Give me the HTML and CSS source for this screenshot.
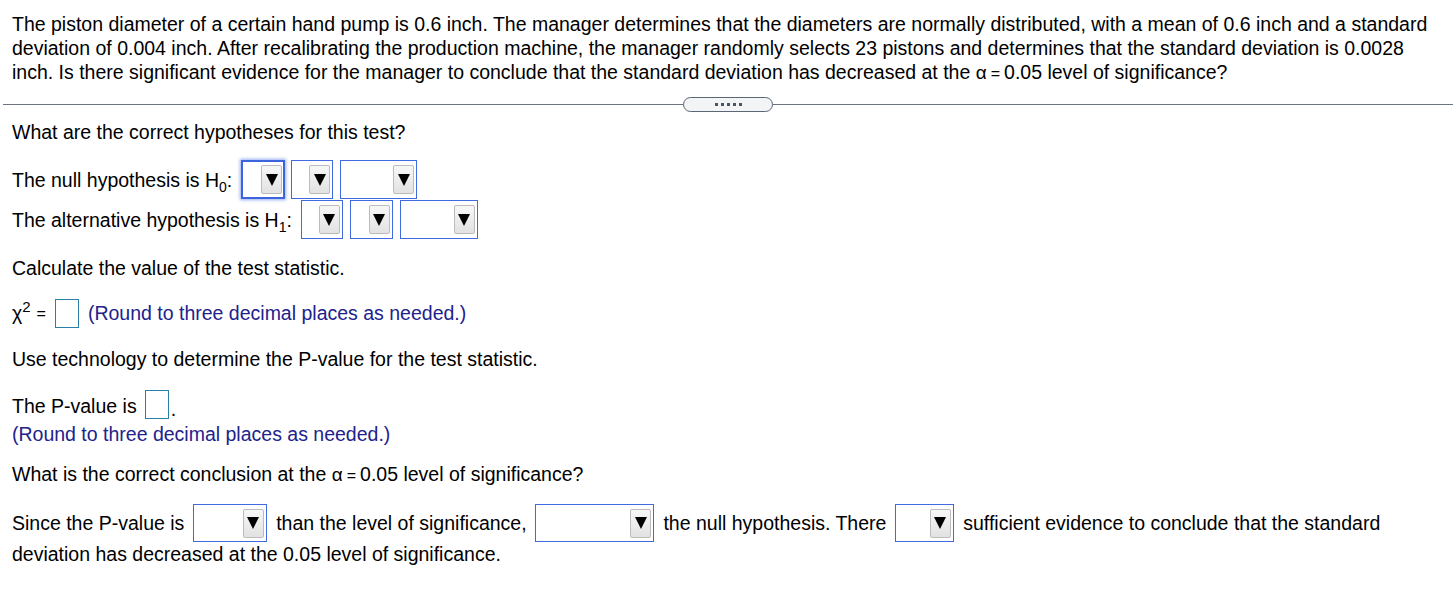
FILE: index.html
```html
<!DOCTYPE html>
<html>
<head>
<meta charset="utf-8">
<link rel="stylesheet" href="styles.css">
</head>
<body>
<div class="question"><span>The piston diameter of a certain hand pump is 0.6 inch. The manager determines that the diameters are normally distributed, with a mean of 0.6 inch and a standard</span> <span>deviation of 0.004 inch. After recalibrating the production machine, the manager randomly selects 23 pistons and determines that the standard deviation is 0.0028</span> <span>inch. Is there significant evidence for the manager to conclude that the standard deviation has decreased at the</span> <span class="greek">α</span><span class="eq">=</span><span>0.05 level of significance?</span></div>

<div class="divider"><span class="more"><i></i><i></i><i></i><i></i><i></i></span></div>

<div class="answer">
  <p class="line first">What are the correct hypotheses for this test?</p>

  <div class="hrow h0">
    <span class="label">The null hypothesis is H<sub>0</sub>:</span>
    <span class="dd focus w44"><span class="btn"><svg width="12" height="12" viewBox="0 0 12 12"><polygon points="0,0 12,0 6,12" fill="#000"/></svg></span></span>
    <span class="dd w42"><span class="btn"><svg width="12" height="12" viewBox="0 0 12 12"><polygon points="0,0 12,0 6,12" fill="#000"/></svg></span></span>
    <span class="dd w77"><span class="btn"><svg width="12" height="12" viewBox="0 0 12 12"><polygon points="0,0 12,0 6,12" fill="#000"/></svg></span></span>
  </div>
  <div class="hrow h1">
    <span class="label">The alternative hypothesis is H<sub>1</sub>:</span>
    <span class="dd w42"><span class="btn"><svg width="12" height="12" viewBox="0 0 12 12"><polygon points="0,0 12,0 6,12" fill="#000"/></svg></span></span>
    <span class="dd w43"><span class="btn"><svg width="12" height="12" viewBox="0 0 12 12"><polygon points="0,0 12,0 6,12" fill="#000"/></svg></span></span>
    <span class="dd w78"><span class="btn"><svg width="12" height="12" viewBox="0 0 12 12"><polygon points="0,0 12,0 6,12" fill="#000"/></svg></span></span>
  </div>

  <p class="line calc">Calculate the value of the test statistic.</p>

  <div class="irow chi">
    <span class="chisym">χ<sup>2</sup></span><span class="eqs">=</span><span class="inp"></span><span class="note">(Round to three decimal places as needed.)</span>
  </div>

  <p class="line tech">Use technology to determine the P-value for the test statistic.</p>

  <div class="irow pval">
    <span>The P-value is</span><span class="inp"></span><span class="dot">.</span>
  </div>
  <p class="line note pnote">(Round to three decimal places as needed.)</p>

  <p class="line concl">What is the correct conclusion at the <span class="greek">α</span><span class="eq">=</span>0.05 level of significance?</p>

  <p class="final"><span>Since the P-value is</span> <span class="dd w74 inl"><span class="btn"><svg width="12" height="12" viewBox="0 0 12 12"><polygon points="0,0 12,0 6,12" fill="#000"/></svg></span></span> <span>than the level of significance,</span> <span class="dd w119 inl"><span class="btn"><svg width="12" height="12" viewBox="0 0 12 12"><polygon points="0,0 12,0 6,12" fill="#000"/></svg></span></span> <span>the null hypothesis. There</span> <span class="dd w59 inl"><span class="btn"><svg width="12" height="12" viewBox="0 0 12 12"><polygon points="0,0 12,0 6,12" fill="#000"/></svg></span></span> <span>sufficient evidence to conclude that the standard</span> <span>deviation has decreased at the 0.05 level of significance.</span></p>
</div>
</body>
</html>
```

FILE: styles.css
```css
html, body {
  margin: 0;
  padding: 0;
  background: #fff;
}
body {
  font-family: "Liberation Sans", Arial, sans-serif;
  font-size: 19.5px;
  line-height: 24px;
  color: #000;
}
.question {
  padding: 12px 14px 0 12px;
}
.greek {
  font-size: 19px;
}
.eq {
  display: inline-block;
  margin: 0 4px;
  font-size: 16px;
}
.divider {
  position: relative;
  margin: 11px 0 0 3px;
  height: 15px;
  display: flex;
  justify-content: center;
}
.divider::before {
  content: "";
  position: absolute;
  left: 0;
  right: 0;
  top: 7px;
  border-top: 1px solid #6b7480;
}
.more {
  position: relative;
  box-sizing: border-box;
  width: 90px;
  height: 15px;
  border: 1px solid #5b6676;
  border-radius: 8px;
  background: #f3f4f6;
  display: flex;
  align-items: center;
  justify-content: center;
  gap: 3px;
}
.more i {
  display: block;
  width: 3px;
  height: 3px;
  background: #4b5563;
}
.answer {
  padding: 0 12px;
}
.line {
  margin: 0;
}
.first {
  margin-top: 8px;
}
.hrow {
  display: flex;
  align-items: center;
  height: 39px;
}
.h0 {
  margin-top: 16px;
}
.h1 {
  margin-top: 1px;
}
.label {
  margin-right: 9px;
}
sub {
  font-size: 14px;
  line-height: 0;
  vertical-align: -5px;
}
sup {
  font-size: 15px;
  line-height: 0;
  vertical-align: 8px;
}
.dd {
  box-sizing: border-box;
  height: 39px;
  border: 1px solid #4169e1;
  background: #fff;
  display: inline-flex;
  align-items: center;
  justify-content: flex-end;
  padding-right: 2px;
  margin-right: 7px;
}
.dd.focus {
  border: 2px solid #3c64dc;
  box-shadow: 0 0 3px 1px rgba(80, 120, 235, 0.6);
  padding-right: 1px;
  margin-right: 6px;
}
.btn {
  box-sizing: border-box;
  width: 21px;
  height: 29px;
  border: 1px solid #bcbcbc;
  border-radius: 2px;
  background: linear-gradient(#f7f7f7, #e2e2e2);
  display: flex;
  align-items: center;
  justify-content: center;
}
.btn svg {
  display: block;
}
.w42 { width: 42px; }
.w43 { width: 43px; }
.w44 { width: 44px; }
.w77 { width: 77px; }
.w78 { width: 78px; }
.w74 { width: 74px; }
.w119 { width: 119px; }
.w59 { width: 59px; }
.calc {
  margin-top: 17px;
}
.irow {
  display: flex;
  align-items: center;
  height: 29px;
}
.chi {
  margin-top: 19px;
}
.chisym {
  font-size: 19.5px;
  position: relative;
  top: -1px;
}
.eqs {
  margin: 0 9px 0 6px;
  font-size: 16px;
}
.inp {
  box-sizing: border-box;
  width: 24px;
  height: 29px;
  border: 1px solid #2a7fa6;
  background: #fff;
}
.chi .inp {
  margin-right: 9px;
}
.chi .note {
  position: relative;
  top: -1px;
}
.note {
  color: #22228c;
}
.tech {
  margin-top: 19px;
}
.pval {
  margin-top: 19px;
}
.pval .inp {
  margin-left: 8px;
  margin-right: 2px;
}
.pval span:first-child {
  position: relative;
  top: 1px;
}
.pval .dot {
  position: relative;
  top: 4px;
}
.pnote {
  margin-top: 3px;
}
.concl {
  margin-top: 16px;
}
.final {
  margin: 20px 0 0 0;
}
.dd.inl {
  height: 38px;
  vertical-align: middle;
  margin: -2px 4px -2px 3px;
  position: relative;
  top: -2px;
}
```
